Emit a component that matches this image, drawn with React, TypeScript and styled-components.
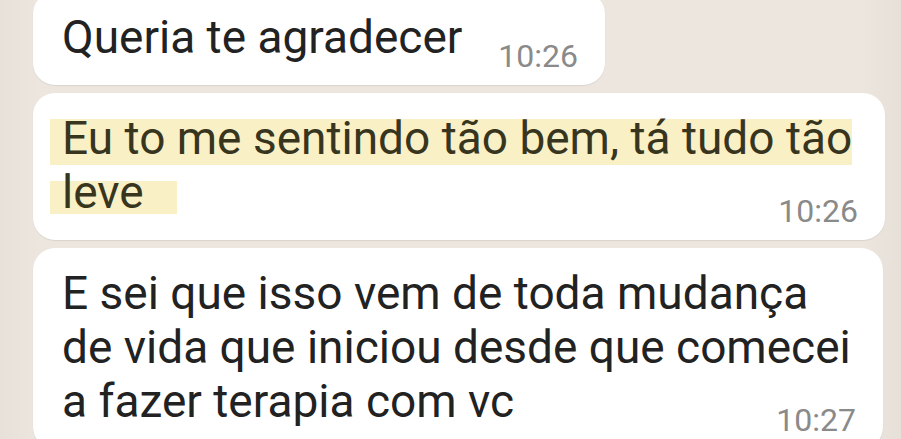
import styled, { createGlobalStyle } from 'styled-components';

const GlobalStyle = createGlobalStyle`
  html, body {
    margin: 0;
    padding: 0;
    background: #ebe5de;
    overflow: hidden;
  }
`;

const Chat = styled.div`
  width: 901px;
  height: 439px;
  box-sizing: border-box;
  overflow: hidden;
  background: linear-gradient(90deg, #e7e1da 0, #ece6df 40px, #ece6df 860px, #e6e0d9 100%);
  font-family: Roboto, 'Noto Sans', sans-serif;
`;

const List = styled.div`
  display: flex;
  flex-direction: column;
  gap: 8px;
  margin-top: -8px;
  padding-left: 33px;
`;

const Bubble = styled.div<{ $width: number }>`
  width: ${({ $width }) => $width}px;
  box-sizing: border-box;
  padding: 18px 27px 13px 29px;
  background: #ffffff;
  border-radius: 22px;
  box-shadow: 0 1px 1px rgba(0, 0, 0, 0.08);
`;

const Line = styled.div`
  font-size: 46px;
  line-height: 54px;
  color: #222222;
  white-space: nowrap;
`;

const LastRow = styled.div`
  display: flex;
  align-items: flex-end;
  justify-content: space-between;
`;

const LastText = styled(Line)`
  padding-bottom: 8px;
`;

const Time = styled.span`
  font-size: 32px;
  line-height: 31px;
  color: #8a8a8a;
`;

const Mark = styled.span<{ $top: number; $height: number; $tail: number }>`
  color: #38351f;
  margin-left: -12px;
  padding-left: 12px;
  padding-right: ${({ $tail }) => $tail}px;
  background-image: linear-gradient(#faf0c6, #faf0c6);
  background-repeat: no-repeat;
  background-position: 0 ${({ $top }) => $top}px;
  background-size: 100% ${({ $height }) => $height}px;
`;

export default function App() {
  return (
    <Chat>
      <GlobalStyle />
      <List>
        <Bubble $width={572}>
          <LastRow>
            <LastText>Queria te agradecer</LastText>
            <Time>10:26</Time>
          </LastRow>
        </Bubble>
        <Bubble $width={852}>
          <Line>
            <Mark $top={8} $height={49} $tail={0}>
              Eu to me sentindo tão bem, tá tudo tão
            </Mark>
          </Line>
          <LastRow>
            <LastText>
              <Mark $top={16} $height={33} $tail={33}>
                leve
              </Mark>
            </LastText>
            <Time>10:26</Time>
          </LastRow>
        </Bubble>
        <Bubble $width={850}>
          <Line>E sei que isso vem de toda mudança</Line>
          <Line>de vida que iniciou desde que comecei</Line>
          <LastRow>
            <LastText>a fazer terapia com vc</LastText>
            <Time>10:27</Time>
          </LastRow>
        </Bubble>
      </List>
    </Chat>
  );
}
